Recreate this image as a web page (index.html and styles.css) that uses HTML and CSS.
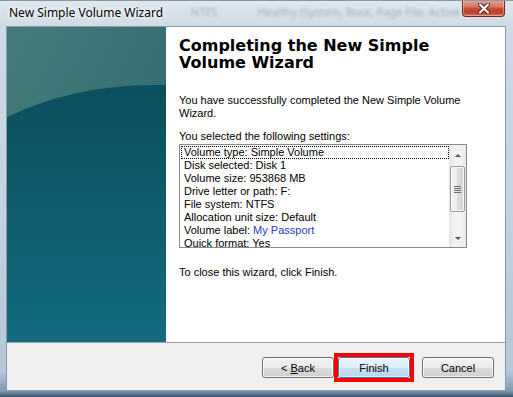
FILE: index.html
```html
<!DOCTYPE html>
<html lang="en">
<head>
    <meta charset="UTF-8">
    <title>New Simple Volume Wizard</title>
    <link rel="stylesheet" href="styles.css">
</head>
<body>
    <div class="window">
        <div class="titlebar">
            <span class="title">New Simple Volume Wizard</span>
            <span class="glass">
                <span class="glass-fs">NTFS</span>
                <span class="glass-status">Healthy (System, Boot, Page File, Active</span>
            </span>
            <div class="close-btn">
                <svg width="16" height="11" viewBox="0 0 16 11">
                    <path d="M4 1.5 L12 9.5 M12 1.5 L4 9.5" stroke="#5a1c12" stroke-width="4" stroke-linecap="round"/>
                    <path d="M4 1.5 L12 9.5 M12 1.5 L4 9.5" stroke="#ffffff" stroke-width="2.2" stroke-linecap="round"/>
                </svg>
            </div>
        </div>

        <div class="client">
            <div class="main">
                <div class="side">
                    <svg width="159" height="315" viewBox="0 0 159 315">
                        <defs>
                            <linearGradient id="topGlow" x1="0" y1="0" x2="1" y2="1">
                                <stop offset="0" stop-color="#467c7b"/>
                                <stop offset="1" stop-color="#2b646a"/>
                            </linearGradient>
                            <linearGradient id="deep" x1="0" y1="0" x2="0" y2="1">
                                <stop offset="0" stop-color="#0b4f5d"/>
                                <stop offset="0.5" stop-color="#0f5d6d"/>
                                <stop offset="1" stop-color="#146b80"/>
                            </linearGradient>
                        </defs>
                        <rect width="159" height="315" fill="url(#topGlow)"/>
                        <path d="M0 90 Q 70 56 159 58 L159 315 L0 315 Z" fill="url(#deep)"/>
                    </svg>
                </div>

                <div class="content">
                    <h1>Completing the New Simple Volume Wizard</h1>
                    <p class="intro">You have successfully completed the New Simple Volume Wizard.</p>
                    <p class="label">You selected the following settings:</p>

                    <div class="listbox">
                        <ul class="items">
                            <li class="focused">Volume type: Simple Volume</li>
                            <li>Disk selected: Disk 1</li>
                            <li>Volume size: 953868 MB</li>
                            <li>Drive letter or path: F:</li>
                            <li>File system: NTFS</li>
                            <li>Allocation unit size: Default</li>
                            <li>Volume label: <span class="value">My Passport</span></li>
                            <li>Quick format: Yes</li>
                            <li>Enable file and folder compression: No</li>
                        </ul>
                        <div class="scrollbar">
                            <div class="arrow up"></div>
                            <div class="track">
                                <div class="thumb">
                                    <span class="grip"></span>
                                    <span class="grip"></span>
                                    <span class="grip"></span>
                                    <span class="grip"></span>
                                </div>
                            </div>
                            <div class="arrow down"></div>
                        </div>
                    </div>

                    <p class="hint">To close this wizard, click Finish.</p>
                </div>
            </div>

            <div class="footer">
                <button class="btn back">&lt; <u>B</u>ack</button>
                <span class="mark">
                    <button class="btn default">Finish</button>
                </span>
                <button class="btn cancel">Cancel</button>
            </div>
        </div>
    </div>
</body>
</html>
```

FILE: styles.css
```css
body {
    margin: 0;
    padding: 0;
    background: #ffffff;
}
.window {
    width: 513px;
    height: 397px;
    box-sizing: border-box;
    display: flex;
    flex-direction: column;
    padding: 0 7px 6px 6px;
    background: linear-gradient(to bottom, #dfe7ee 0, #cfdbe6 26px, #c3d3e0 200px, #b4c8d9 370px, #7f9ab3 390px, #2c4663 397px);
    border-top: 1px solid #8c98a4;
}
.titlebar {
    height: 25px;
    display: flex;
    align-items: flex-start;
    overflow: hidden;
    margin-right: -7px;
    font-family: "Noto Sans", sans-serif;
    font-size: 12px;
}
.title {
    padding: 3px 0 0 3px;
    color: #000;
    white-space: nowrap;
    text-shadow: 0 0 6px #fff, 0 0 3px #fff;
}
.glass {
    flex: 1;
    min-width: 0;
    display: flex;
    white-space: nowrap;
    overflow: hidden;
    padding-top: 3px;
    font-size: 11px;
    color: #9cadbd;
    filter: blur(1.4px);
}
.glass-fs {
    margin-left: 28px;
}
.glass-status {
    margin-left: 40px;
}
.close-btn {
    width: 41px;
    height: 16px;
    margin-right: 8px;
    margin-top: -1px;
    display: flex;
    align-items: center;
    justify-content: center;
    border: 1px solid #6b2b20;
    border-top: none;
    border-radius: 0 0 4px 4px;
    background: linear-gradient(to bottom, #e6a595 0, #d77a66 40%, #c54a33 55%, #c0402a 80%, #d7735b 100%);
    box-shadow: inset 0 0 0 1px rgba(255, 255, 255, 0.35);
}
.client {
    flex: 1;
    display: flex;
    flex-direction: column;
    border: 1px solid #8a99a8;
    background: #f0f0f0;
}
.main {
    height: 315px;
    display: flex;
    background: #fff;
    border-bottom: 1px solid #a0a0a0;
}
.side {
    width: 159px;
    height: 315px;
    flex: none;
}
.side svg {
    display: block;
}
.content {
    flex: 1;
    padding: 10px 38px 0 13px;
    font-family: "Liberation Sans", Arial, sans-serif;
    font-size: 11px;
    line-height: 13px;
    color: #000;
}
h1 {
    margin: 0;
    font-family: "DejaVu Sans", Verdana, sans-serif;
    font-size: 16px;
    line-height: 17px;
    font-weight: bold;
    color: #000;
}
p {
    margin: 0;
}
.intro {
    margin-top: 23px;
}
.label {
    margin-top: 10px;
}
.listbox {
    margin-top: 1px;
    height: 102px;
    display: flex;
    border: 1px solid #8a8a8a;
    background: #fff;
}
.items {
    flex: 1;
    margin: 0;
    padding: 1px 0 0 0;
    list-style: none;
    overflow: hidden;
}
.items li {
    height: 13px;
    margin-left: 1px;
    padding-left: 2px;
    white-space: nowrap;
    box-sizing: border-box;
    border: 1px solid transparent;
    line-height: 11px;
}
.items li.focused {
    border: 1px dotted #000;
}
.value {
    color: #2341c0;
}
.scrollbar {
    width: 17px;
    flex: none;
    display: flex;
    flex-direction: column;
    background: linear-gradient(to right, #e4e4e4, #f2f2f2 30%, #f2f2f2 70%, #e8e8e8);
}
.arrow {
    height: 21px;
    display: flex;
    align-items: center;
    justify-content: center;
}
.arrow::before {
    content: "";
    width: 0;
    height: 0;
    border-left: 3px solid transparent;
    border-right: 3px solid transparent;
}
.arrow.up::before {
    border-bottom: 3px solid #555;
}
.arrow.down::before {
    border-top: 3px solid #555;
    margin-top: 4px;
}
.track {
    flex: 1;
    padding: 0 1px;
}
.thumb {
    height: 46px;
    box-sizing: border-box;
    display: flex;
    flex-direction: column;
    align-items: center;
    justify-content: center;
    gap: 1px;
    border: 1px solid #9b9b9b;
    border-radius: 2px;
    background: linear-gradient(to right, #f4f4f4, #ececec 50%, #dedede 50%, #d4d4d4);
    box-shadow: inset 0 0 0 1px rgba(255, 255, 255, 0.8);
}
.grip {
    width: 7px;
    height: 1px;
    background: #6e6e6e;
}
.hint {
    margin-top: 18px;
}
.footer {
    flex: 1;
    display: flex;
    justify-content: flex-end;
    align-items: flex-start;
    padding: 10px 11px 0 0;
}
.btn {
    display: block;
    width: 72px;
    height: 21px;
    padding: 0;
    margin-top: 4px;
    font-family: "Liberation Sans", Arial, sans-serif;
    font-size: 11px;
    color: #000;
    border: 1px solid #707070;
    border-radius: 3px;
    background: linear-gradient(to bottom, #f2f2f2 0, #ebebeb 50%, #dddddd 50%, #cfcfcf 100%);
    box-shadow: inset 0 0 0 1px rgba(255, 255, 255, 0.75);
}
.btn u {
    text-decoration: underline;
}
.mark {
    display: block;
    border: 4px solid #f00;
    margin-right: 8px;
}
.mark .btn {
    margin-top: 0;
}
.default {
    border-color: #3c7fb1;
    background: linear-gradient(to bottom, #eaf4fa 0, #dcecf6 50%, #c6e0f0 50%, #b9d7ea 100%);
    box-shadow: inset 0 0 0 1px rgba(255, 255, 255, 0.6);
}
```
